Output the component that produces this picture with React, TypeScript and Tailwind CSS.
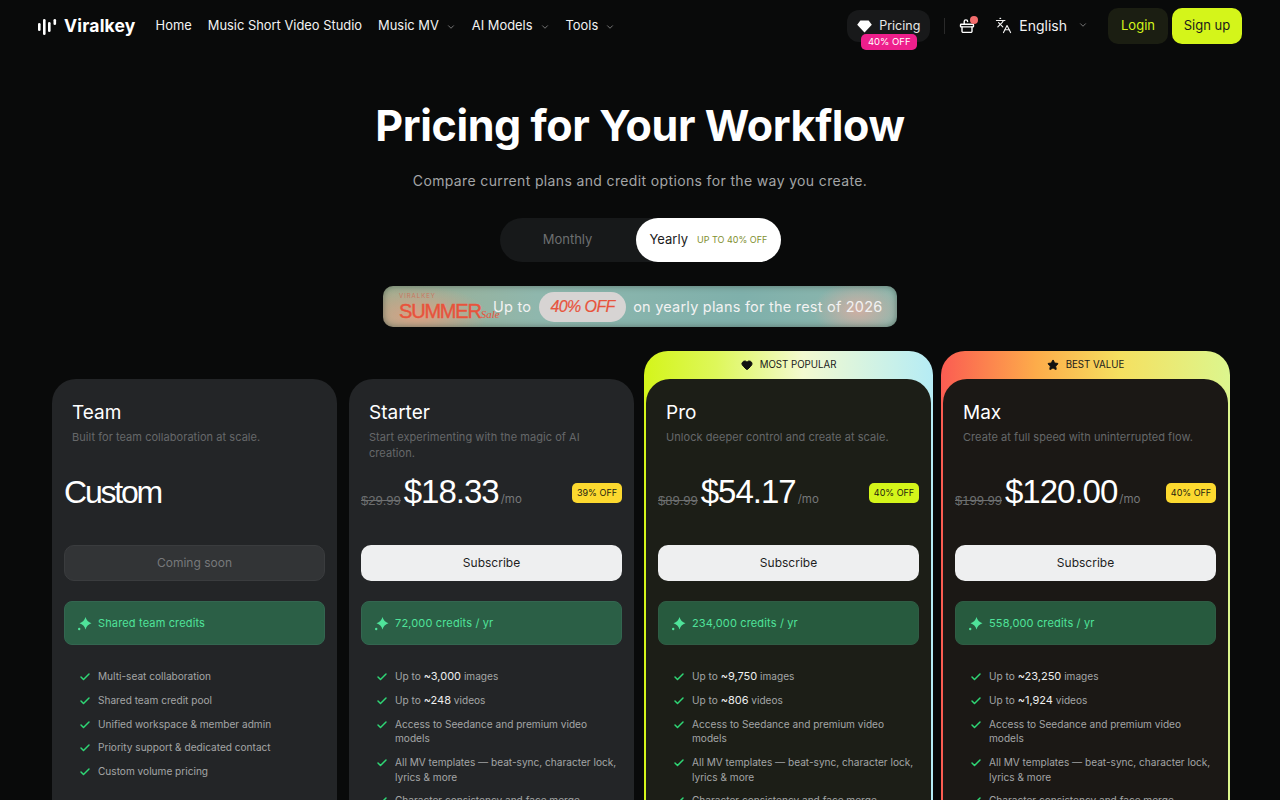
import { Check, ChevronDown, Languages, Star, Heart } from "lucide-react";

type Plan = {
  name: string;
  desc: string;
  old?: string;
  price: string;
  off?: string;
  offClass?: string;
  credits: string;
  cta: string;
  features: (string | [string, string, string])[];
  tag?: "pop" | "best";
  bg: string;
};

const shared = (images: string, videos: string): Plan["features"] => [
  ["Up to ", images, " images"],
  ["Up to ", videos, " videos"],
  "Access to Seedance and premium video models",
  "All MV templates — beat-sync, character lock, lyrics & more",
  "Character consistency and face merge",
  "Commercial use license included",
];

const plans: Plan[] = [
  {
    name: "Team",
    desc: "Built for team collaboration at scale.",
    price: "Custom",
    credits: "Shared team credits",
    cta: "Coming soon",
    bg: "bg-[#232527]",
    features: [
      "Multi-seat collaboration",
      "Shared team credit pool",
      "Unified workspace & member admin",
      "Priority support & dedicated contact",
      "Custom volume pricing",
    ],
  },
  {
    name: "Starter",
    desc: "Start experimenting with the magic of AI creation.",
    old: "$29.99",
    price: "$18.33",
    off: "39% OFF",
    offClass: "bg-[#fcd92f]",
    credits: "72,000 credits / yr",
    cta: "Subscribe",
    bg: "bg-[#232527]",
    features: shared("~3,000", "~248"),
  },
  {
    name: "Pro",
    desc: "Unlock deeper control and create at scale.",
    old: "$89.99",
    price: "$54.17",
    off: "40% OFF",
    offClass: "bg-[#d4f51a]",
    credits: "234,000 credits / yr",
    cta: "Subscribe",
    tag: "pop",
    bg: "bg-[#1c1e17]",
    features: shared("~9,750", "~806"),
  },
  {
    name: "Max",
    desc: "Create at full speed with uninterrupted flow.",
    old: "$199.99",
    price: "$120.00",
    off: "40% OFF",
    offClass: "bg-[#fcd92f]",
    credits: "558,000 credits / yr",
    cta: "Subscribe",
    tag: "best",
    bg: "bg-[#1b1815]",
    features: shared("~23,250", "~1,924"),
  },
];

function Logo() {
  return (
    <svg width="19" height="17" viewBox="0 0 19 17" fill="white">
      <rect x="0" y="5" width="2.6" height="8" rx="1.3" />
      <rect x="5" y="1" width="2.6" height="16" rx="1.3" />
      <rect x="10" y="4" width="2.6" height="10" rx="1.3" />
      <rect x="15.5" y="1" width="2.6" height="6" rx="1.3" />
    </svg>
  );
}

function Sparkle() {
  return (
    <svg width="15" height="15" viewBox="0 0 15 15" fill="#4fe39a" className="shrink-0">
      <path d="M8.5 1 Q9.8 5.9 14.5 7.2 Q9.8 8.5 8.5 13.5 Q7.2 8.5 2.5 7.2 Q7.2 5.9 8.5 1Z" />
      <circle cx="2.2" cy="13" r="1.2" />
    </svg>
  );
}

function Basket() {
  return (
    <svg width="16" height="16" viewBox="0 0 16 16" fill="none" stroke="white" strokeWidth="1.4" strokeLinejoin="round" strokeLinecap="round">
      <rect x="1.5" y="6.3" width="13" height="2.6" rx="0.6" />
      <path d="M3 9v4.2a1.2 1.2 0 0 0 1.2 1.2h7.6a1.2 1.2 0 0 0 1.2-1.2V9" />
      <path d="M5.2 6.3V3.6a1.7 1.7 0 0 1 3.4 0" />
    </svg>
  );
}

function Gem() {
  return (
    <svg width="15" height="13" viewBox="0 0 15 13" fill="white">
      <path d="M3.4 0.5h8.2l3.2 4.2-7.3 7.8L0.2 4.7z" />
    </svg>
  );
}

function Nav() {
  const links: [string, boolean][] = [
    ["Home", false],
    ["Music Short Video Studio", false],
    ["Music MV", true],
    ["AI Models", true],
    ["Tools", true],
  ];
  return (
    <header className="flex h-[52px] items-center pl-[38px] pr-[38px]">
      <div className="flex items-center gap-[7px]">
        <Logo />
        <span className="text-[17.5px] font-bold tracking-[0.2px] text-white">Viralkey</span>
      </div>
      <nav className="ml-[20px] flex items-center gap-[16px] text-[12.9px] text-[#f2f2f2]">
        {links.map(([l, c]) => (
          <span key={l} className="flex items-center gap-[7px]">
            {l}
            {c && <ChevronDown size={10} className="mt-[2px] text-[#8a8a8a]" />}
          </span>
        ))}
      </nav>
      <div className="ml-auto flex items-center">
        <div className="relative flex h-[32px] w-[83px] items-center justify-center gap-[7px] rounded-[12px] bg-[#18191a] text-[12.5px] text-[#e8e8e8]">
          <Gem />
          Pricing
          <span className="absolute left-[14px] top-[24px] flex h-[16px] w-[56px] items-center justify-center rounded-[5px] bg-[#ee1f8c] text-[9.5px] text-white">
            40% OFF
          </span>
        </div>
        <div className="ml-[14px] h-[16px] w-px bg-[#2a2a2a]" />
        <div className="relative ml-[14px]">
          <Basket />
          <span className="absolute -right-[3px] -top-[2px] h-[8px] w-[8px] rounded-full bg-[#f26d6d]" />
        </div>
        <div className="ml-[20px] flex items-center gap-[7px] pb-[2px] text-[14px] text-[#f2f2f2]">
          <Languages size={17} strokeWidth={1.6} />
          English
          <ChevronDown size={10} className="ml-[4px] text-[#8a8a8a]" />
        </div>
        <button className="ml-[20px] h-[36px] w-[60px] rounded-[10px] bg-[#1b1e12] text-[13px] text-[#d4f51a]">Login</button>
        <button className="ml-[4px] h-[36px] w-[70px] rounded-[10px] bg-[#d4f51a] text-[13px] text-[#1a1a1a]">Sign up</button>
      </div>
    </header>
  );
}

function Feature({ f }: { f: Plan["features"][number] }) {
  return (
    <li className="flex gap-[7px] text-[10.1px] leading-[14.6px] text-[#a3a5a6]">
      <Check size={12} strokeWidth={3} className="mt-[2px] shrink-0 text-[#2fd675]" />
      <span>
        {typeof f === "string" ? (
          f
        ) : (
          <>
            {f[0]}
            <span className="text-[11px] text-[#eeeeee]">{f[1]}</span>
            {f[2]}
          </>
        )}
      </span>
    </li>
  );
}

function Card({ p }: { p: Plan }) {
  const disabled = p.cta === "Coming soon";
  return (
    <div className={`relative flex h-[700px] flex-col rounded-[24px] ${p.bg} px-[12px]`}>
      <div className="px-[8px] pt-[22px]">
        <h3 className="text-[19px] leading-[24px] text-white">{p.name}</h3>
        <p className="mt-[4px] h-[32px] text-[11px] leading-[16px] tracking-[0.05px] text-[#66686a]">{p.desc}</p>
      </div>
      <div className="mt-[8px] flex h-[48px] items-center">
        {p.old && (
          <span className="mt-[16px] mr-[3px] font-['Liberation_Sans',sans-serif] text-[13px] text-[#6d6f70] line-through">{p.old}</span>
        )}
        <span
          className={`mb-[2px] font-['Liberation_Sans',sans-serif] text-white ${
            p.old ? "text-[33px] tracking-[-1px]" : "text-[32px] tracking-[-2.2px]"
          }`}
        >
          {p.price}
        </span>
        {p.old && <span className="mt-[13px] ml-[2px] text-[11.5px] text-[#77797a]">/mo</span>}
        {p.off && (
          <span className={`ml-auto flex h-[20px] w-[50px] items-center justify-center rounded-[5px] text-[9px] text-[#22230f] ${p.offClass}`}>
            {p.off}
          </span>
        )}
      </div>
      <button
        className={`mt-[28px] h-[36px] w-full shrink-0 rounded-[10px] text-[12px] ${
          disabled ? "border border-[#3a3c3e] bg-[#323436] text-[#77797b]" : "bg-[#eeeff0] text-[#1e1e1e]"
        }`}
      >
        {p.cta}
      </button>
      <div
        className={`mt-[20px] flex h-[44px] shrink-0 items-center gap-[6px] rounded-[8px] border px-[12px] text-[11px] tracking-[0.15px] text-[#4fe39a] ${
          p.tag ? "border-[#2f5c44] bg-[#275a3e]" : "border-[#336650] bg-[#2b5f46]"
        }`}
      >
        <Sparkle />
        {p.credits}
      </div>
      <ul className="mt-[24px] flex flex-col gap-[9.2px] pl-[15px] pr-[3px]">
        {p.features.map((f, i) => (
          <Feature key={i} f={f} />
        ))}
      </ul>
    </div>
  );
}

function Column({ p }: { p: Plan }) {
  if (!p.tag) {
    return (
      <div className="pt-[28px]">
        <Card p={p} />
      </div>
    );
  }
  const pop = p.tag === "pop";
  return (
    <div
      className={`-mx-[2px] rounded-t-[24px] px-[2px] ${
        pop
          ? "bg-[linear-gradient(90deg,#d4f51a_0%,#def75a_25%,#f3fad0_55%,#b5ecf5_100%)]"
          : "bg-[linear-gradient(90deg,#fb5c52_0%,#fdac4a_33%,#f5e060_62%,#dcf68e_100%)]"
      }`}
    >
      <div className="flex h-[28px] items-center justify-center gap-[7px] text-[9.7px] text-[#1a1a1a]">
        {pop ? <Heart size={12} fill="#111" stroke="#111" /> : <Star size={12} fill="#111" stroke="#111" />}
        <span className="mt-[1px]">{pop ? "MOST POPULAR" : "BEST VALUE"}</span>
      </div>
      <Card p={p} />
    </div>
  );
}

export default function App() {
  return (
    <div className="h-[800px] overflow-hidden bg-[#090a0a] font-['Inter',sans-serif]">
      <Nav />
      <main className="flex flex-col items-center">
        <h1 className="mt-[46px] text-[43px] font-bold leading-[54px] tracking-[-0.4px] text-white">Pricing for Your Workflow</h1>
        <p className="mt-[17px] text-[14px] leading-[24px] tracking-[0.36px] text-[#a3a5a6]">
          Compare current plans and credit options for the way you create.
        </p>
        <div className="mt-[25px] flex h-[44px] w-[281px] items-center rounded-full bg-[#17191a]">
          <span className="ml-[1px] w-[134px] text-center text-[13px] text-[#6d6f70]">Monthly</span>
          <span className="ml-[1px] flex h-[44px] flex-1 items-center gap-[9px] rounded-full bg-white pl-[14px] text-[13px] text-[#1c1c1c]">
            Yearly
            <span className="text-[9px] text-[#7f9030]">UP TO 40% OFF</span>
          </span>
        </div>
        <div className="mt-[24px] flex h-[41px] w-[514px] items-center rounded-[10px] bg-[radial-gradient(ellipse_70px_30px_at_35px_30px,#d9a184,transparent),radial-gradient(ellipse_45px_28px_at_475px_24px,#d0aea2,transparent),linear-gradient(90deg,#9fae90,#8fb7ad_30%,#7fb0ab_70%,#8fb7ad)] pl-[16px] text-[#f2f2f2] shadow-[inset_0_0_6px_rgba(60,70,60,0.6)]">
          <div className="w-[94px] shrink-0 leading-none text-[#e8533c]">
            <div className="text-[6px] tracking-[1px] text-[#c9765f]">VIRALKEY</div>
            <div className="mt-[2px] whitespace-nowrap font-['Liberation_Sans',sans-serif] text-[20px] tracking-[-1.2px] [-webkit-text-stroke:0.4px_#e8533c]">
              SUMMER<span className="font-['Liberation_Serif',serif] text-[11px] tracking-[0px] italic [-webkit-text-stroke:0]">Sale</span>
            </div>
          </div>
          <span className="text-[14.5px] tracking-[0.22px]">Up to</span>
          <span className="ml-[8px] flex h-[30px] w-[87px] items-center justify-center rounded-full bg-[#d7d4d3] font-['Liberation_Sans',sans-serif] text-[16px] italic tracking-[-0.6px] text-[#e8533c] [-webkit-text-stroke:0.2px_#e8533c]">
            40% OFF
          </span>
          <span className="ml-[7px] whitespace-nowrap text-[14.5px] tracking-[0.22px]">on yearly plans for the rest of 2026</span>
        </div>
        <section className="mt-[24px] grid w-[1176px] grid-cols-4 gap-[12px]">
          {plans.map((p) => (
            <Column key={p.name} p={p} />
          ))}
        </section>
      </main>
    </div>
  );
}
